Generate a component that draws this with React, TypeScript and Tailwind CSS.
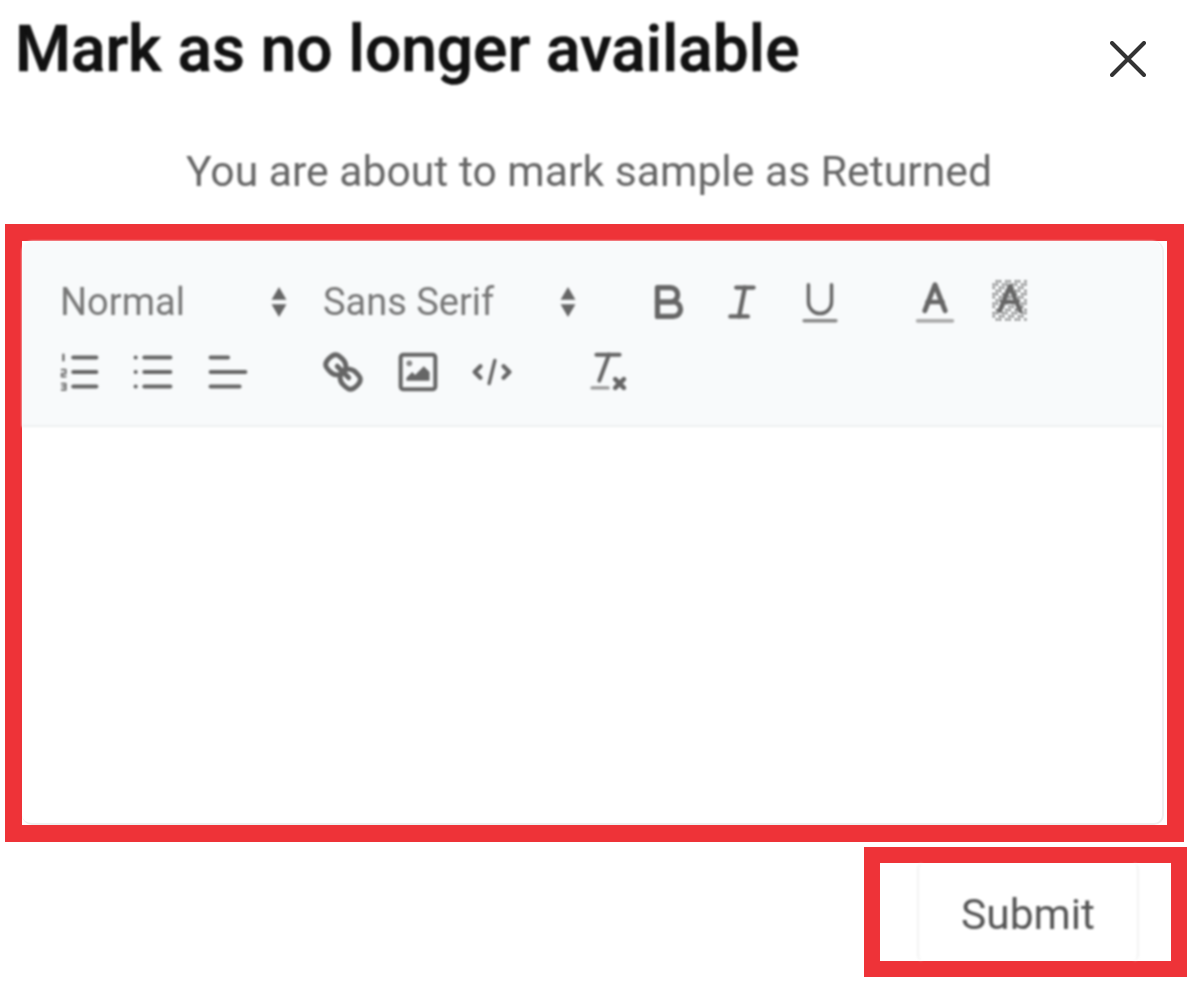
import React from 'react';

const roboto = { fontFamily: 'Roboto, sans-serif' };

function QuillIcon({ children, className = '' }: { children: React.ReactNode; className?: string }) {
  return (
    <svg
      viewBox="0 0 18 18"
      fill="none"
      stroke="#666"
      strokeWidth={1.2}
      strokeLinecap="round"
      strokeLinejoin="round"
      className={`w-[52px] h-[52px] shrink-0 ${className}`}
    >
      {children}
    </svg>
  );
}

function UpDown() {
  return (
    <svg viewBox="0 0 18 30" className="w-[20px] h-[32px] shrink-0" fill="#666">
      <path d="M9 1 L16 13 H2 Z" />
      <path d="M9 29 L16 17 H2 Z" />
    </svg>
  );
}

function HatchBg() {
  const marks: React.ReactNode[] = [];
  for (let y = 1.5; y < 15.5; y += 1.1) {
    for (let x = 3; x < 15; x += 1.1) {
      if ((Math.round(x * 10) + Math.round(y * 10)) % 3 === 0) continue;
      marks.push(<rect key={`${x}-${y}`} x={x} y={y} width={0.7} height={0.7} fill="#555" stroke="none" />);
    }
  }
  return <>{marks}</>;
}

export default function App() {
  return (
    <div className="w-[1187px] h-[988px] bg-white overflow-hidden" style={roboto}>
      <div className="flex items-start justify-between h-[130px] pl-[15px] pr-[41px]">
        <h2 className="mt-[14px] text-[64px] leading-[72px] font-medium text-[#111] [-webkit-text-stroke:0.7px_#111] blur-[1px]">
          Mark as no longer available
        </h2>
        <svg viewBox="0 0 36 36" className="mt-[41px] w-[36px] h-[36px]" stroke="#333" strokeWidth={4} strokeLinecap="round">
          <line x1="2" y1="2" x2="34" y2="34" />
          <line x1="34" y1="2" x2="2" y2="34" />
        </svg>
      </div>

      <p className="h-[94px] pt-[17px] pr-[9px] text-center text-[42.7px] leading-[48px] text-[#666] blur-[1px]">
        You are about to mark sample as Returned
      </p>

      {/* Editor, outlined in red */}
      <div className="ml-[5px] w-[1179px] h-[618px] border-[17px] border-[#ee3338] bg-white">
        <div className="h-[584px] mr-[3px] rounded-[10px] border-r-2 border-b-2 border-[#efefef]">
          <div className="flex flex-col gap-[18px] pt-[35px] h-[186px] bg-[#f8fafb] border-b-2 border-[#eef0f1] rounded-t-[10px] blur-[1.2px]">
            <div className="flex items-center h-[52px] pl-[38px] text-[38px] text-[#777]">
              <div className="flex items-center justify-between w-[229px] mr-[34px]">
                <span>Normal</span>
                <UpDown />
              </div>
              <div className="flex items-center justify-between w-[255px] mr-[65px]">
                <span>Sans Serif</span>
                <UpDown />
              </div>
              <QuillIcon className="mr-[21px]">
                <g strokeWidth={1.8}>
                  <path d="M5,4H9.5A2.5,2.5,0,0,1,12,6.5v0A2.5,2.5,0,0,1,9.5,9H5A0,0,0,0,1,5,9V4A0,0,0,0,1,5,4Z" />
                  <path d="M5,9h5.5A2.5,2.5,0,0,1,13,11.5v0A2.5,2.5,0,0,1,10.5,14H5a0,0,0,0,1,0,0V9A0,0,0,0,1,5,9Z" />
                </g>
              </QuillIcon>
              <QuillIcon className="mr-[26px]">
                <line x1="7" x2="13" y1="4" y2="4" strokeWidth={1.5} />
                <line x1="5" x2="11" y1="14" y2="14" strokeWidth={1.5} />
                <line x1="8" x2="10" y1="14" y2="4" strokeWidth={1.5} />
              </QuillIcon>
              <QuillIcon className="mr-[63px]">
                <path d="M5,3V9a4.012,4.012,0,0,0,4,4H9a4.012,4.012,0,0,0,4-4V3" />
                <line x1="3.5" x2="14.5" y1="15.5" y2="15.5" stroke="#888" />
              </QuillIcon>
              <QuillIcon className="mr-[23px]">
                <line x1="3" x2="15" y1="15.5" y2="15.5" stroke="#aaa" strokeWidth={1.3} />
                <polyline points="5.5 12 9 3 12.5 12" strokeWidth={1.7} />
                <line x1="11.63" x2="6.38" y1="9" y2="9" strokeWidth={1.5} />
              </QuillIcon>
              <QuillIcon>
                <HatchBg />
                <polyline points="5.5 12 9 3.5 12.5 12" strokeWidth={1.6} />
                <line x1="11.63" x2="6.38" y1="9" y2="9" strokeWidth={1.4} />
              </QuillIcon>
            </div>
            <div className="flex items-center h-[52px] pl-[31px]">
              <QuillIcon className="mr-[22px]">
                <g strokeWidth={1.4}>
                  <line x1="7" x2="15" y1="4" y2="4" />
                  <line x1="7" x2="15" y1="9" y2="9" />
                  <line x1="7" x2="15" y1="14" y2="14" />
                </g>
                <line x1="3.6" x2="3.6" y1="3" y2="5" strokeWidth={0.8} />
                <path d="M3 8.2h1.4v1.4H3v1h1.4" strokeWidth={0.6} />
                <path d="M3 13h1.4v2.2H3M3.2 14.1h1.2" strokeWidth={0.6} />
              </QuillIcon>
              <QuillIcon className="mr-[23px]">
                <g strokeWidth={1.4}>
                  <line x1="6" x2="15" y1="4" y2="4" />
                  <line x1="6" x2="15" y1="9" y2="9" />
                  <line x1="6" x2="15" y1="14" y2="14" />
                  <line x1="3" x2="3" y1="4" y2="4" />
                  <line x1="3" x2="3" y1="9" y2="9" />
                  <line x1="3" x2="3" y1="14" y2="14" />
                </g>
              </QuillIcon>
              <QuillIcon className="mr-[63px]">
                <g strokeWidth={1.4}>
                  <line x1="3" x2="15" y1="9" y2="9" />
                  <line x1="3" x2="13" y1="14" y2="14" />
                  <line x1="3" x2="9" y1="4" y2="4" />
                </g>
              </QuillIcon>
              <QuillIcon className="mr-[23px]">
                <g strokeWidth={1.7}>
                  <line x1="7" x2="11" y1="7" y2="11" />
                  <path d="M8.9,4.577a3.476,3.476,0,0,1,.36,4.679A3.476,3.476,0,0,1,4.577,8.9C3.185,7.5,2.035,6.4,4.217,4.217S7.5,3.185,8.9,4.577Z" />
                  <path d="M13.423,9.1a3.476,3.476,0,0,0-4.679-.36,3.476,3.476,0,0,0,.36,4.679c1.392,1.392,2.5,2.542,4.679.36S14.815,10.5,13.423,9.1Z" />
                </g>
              </QuillIcon>
              <QuillIcon className="mr-[22px]">
                <rect x="3" y="3" width="12" height="12" rx="1" ry="1" strokeWidth={1.4} />
                <circle cx="6" cy="6" r="1" fill="#888" stroke="none" />
                <polyline points="5 12 5 11 7 9 8 10 11 7 13 9 13 12 5 12" fill="#666" stroke="none" />
              </QuillIcon>
              <QuillIcon className="mr-[64px]">
                <polyline points="5 7 3 9 5 11" strokeWidth={1.5} />
                <polyline points="13 7 15 9 13 11" strokeWidth={1.5} />
                <line x1="10" x2="8" y1="5" y2="13" />
              </QuillIcon>
              <QuillIcon>
                <line x1="5" x2="13" y1="3" y2="3" strokeWidth={1.4} />
                <line x1="6" x2="9.35" y1="12" y2="3" strokeWidth={1.4} />
                <line x1="11.5" x2="14.5" y1="11.5" y2="14.5" strokeWidth={1.6} />
                <line x1="14.5" x2="11.5" y1="11.5" y2="14.5" strokeWidth={1.6} />
                <line x1="3.5" x2="9" y1="14.5" y2="14.5" stroke="#999" />
              </QuillIcon>
            </div>
          </div>
        </div>
      </div>

      {/* Submit, outlined in red */}
      <div className="flex justify-end mt-[5px]">
        <div className="flex w-[323px] h-[130px] pl-[37px] border-[16px] border-[#ee3338] bg-white">
          <button className="w-[222px] h-full pt-[6px] text-[42.5px] text-[#555] border-x-2 border-[#f3f3f3] rounded-[6px] blur-[1px]">
            Submit
          </button>
        </div>
      </div>
    </div>
  );
}
